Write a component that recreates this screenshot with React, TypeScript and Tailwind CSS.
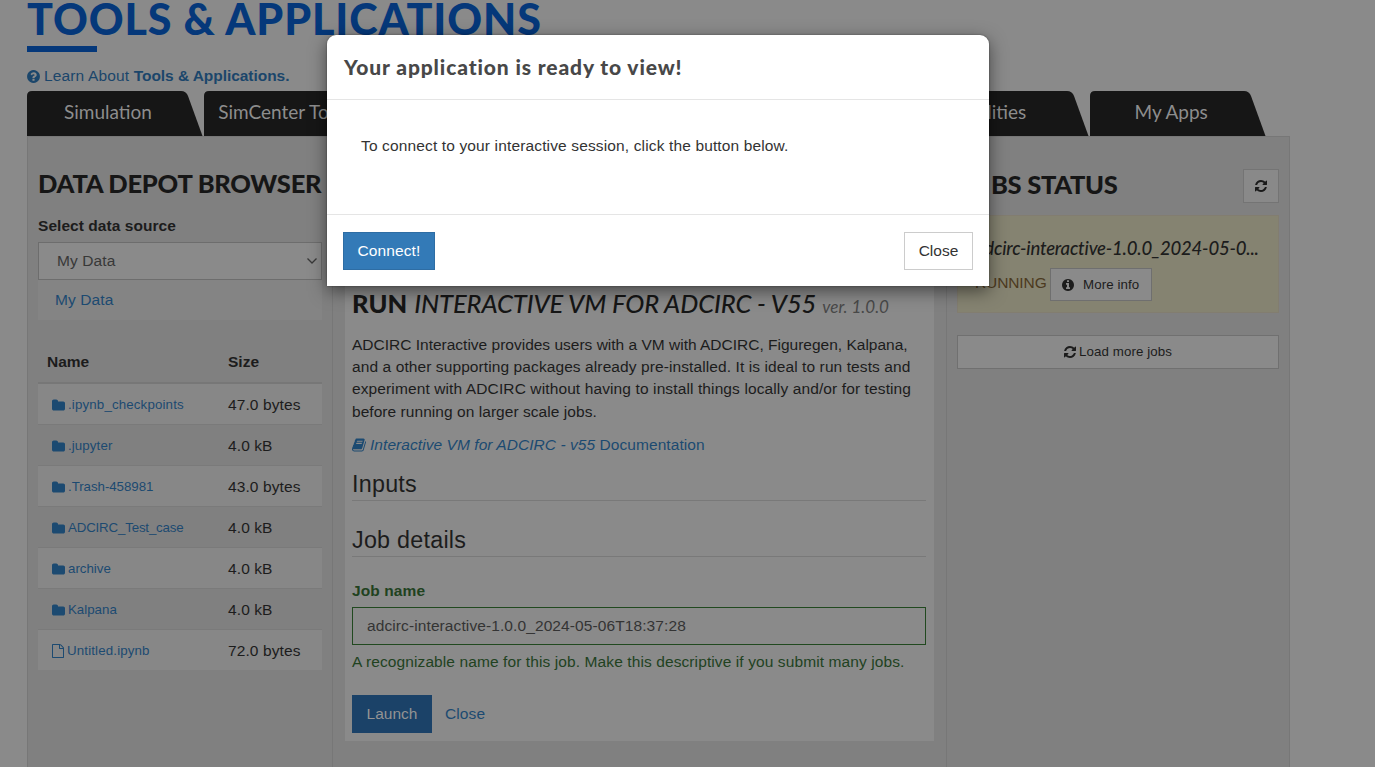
import React from "react";

const REFRESH =
  "M1511 1056q0 5-1 7-64 268-268 434.5t-478 166.5q-146 0-282.5-55t-243.5-157l-129 129q-19 19-45 19t-45-19-19-45v-448q0-26 19-45t45-19h448q26 0 45 19t19 45-19 45l-137 137q71 66 161 102t187 36q134 0 250-65t186-179q11-17 53-117 8-23 30-23h192q13 0 22.5 9.5t9.5 22.5zm25-800v448q0 26-19 45t-45 19h-448q-26 0-45-19t-19-45 19-45l138-138q-148-137-349-137-134 0-250 65t-186 179q-11 17-53 117-8 23-30 23h-199q-13 0-22.5-9.5t-9.5-22.5v-7q65-268 270-434.5t480-166.5q146 0 284 55.5t245 156.5l130-129q19-19 45-19t45 19 19 45z";
const FOLDER =
  "M1664 608v704q0 92-66 158t-158 66h-1216q-92 0-158-66t-66-158v-960q0-92 66-158t158-66h320q92 0 158 66t66 158v32h672q92 0 158 66t66 158z";
const FILE =
  "M1468 380q28 28 48 76t20 88v1152q0 40-28 68t-68 28h-1344q-40 0-68-28t-28-68v-1600q0-40 28-68t68-28h896q40 0 88 20t76 48zm-444-244v376h376q-10-29-22-41l-313-313q-12-12-41-22zm384 1528v-1024h-416q-40 0-68-28t-28-68v-416h-768v1536h1280z";
const INFO =
  "M1024 1376v-160q0-14-9-23t-23-9h-96v-512q0-14-9-23t-23-9h-320q-14 0-23 9t-9 23v160q0 14 9 23t23 9h96v320h-96q-14 0-23 9t-9 23v160q0 14 9 23t23 9h448q14 0 23-9t9-23zm-128-896v-160q0-14-9-23t-23-9h-192q-14 0-23 9t-9 23v160q0 14 9 23t23 9h192q14 0 23-9t9-23zm640 416q0 209-103 385.5t-279.5 279.5-385.5 103-385.5-103-279.5-279.5-103-385.5 103-385.5 279.5-279.5 385.5-103 385.5 103 279.5 279.5 103 385.5z";
const QUESTION =
  "M896 1376v-192q0-14-9-23t-23-9h-192q-14 0-23 9t-9 23v192q0 14 9 23t23 9h192q14 0 23-9t9-23zm256-672q0-88-55.5-163t-138.5-116-170-41q-243 0-371 213-15 24 8 42l132 100q7 6 19 6 16 0 25-12 53-68 86-92 34-24 86-24 48 0 85.5 26t37.5 59q0 38-20 61t-68 45q-63 28-115.5 86.5t-52.5 125.5v36q0 14 9 23t23 9h192q14 0 23-9t9-23q0-19 21.5-49.5t54.5-49.5q32-18 49-28.5t46-35 44.5-48 28-60.5 12.5-81zm384 192q0 209-103 385.5t-279.5 279.5-385.5 103-385.5-103-279.5-279.5-103-385.5 103-385.5 279.5-279.5 385.5-103 385.5 103 279.5 279.5 103 385.5z";
const BOOK =
  "M1639 478q40 57 18 129l-275 906q-19 64-76.5 107.5t-122.5 43.5h-923q-77 0-148.5-53.5t-99.5-131.5q-24-67-2-127 0-4 3-27t4-37q1-8-3-21.5t-3-19.5q2-11 8-21t16.5-23.5 16.5-23.5q23-38 45-91.5t30-91.5q3-10 .5-30t-.5-28q3-11 17-28t17-23q21-36 42-92t25-90q1-9-2.5-32t.5-28q4-13 22-30.5t22-22.5q19-26 42.5-84.5t27.5-96.5q1-8-3-25.5t-2-26.5q2-8 9-18t18-23 17-21q8-12 16.5-30.5t15-35 16-36 19.5-32 26.5-23.5 36-11.5 47.5 5.5l-1 3q38-9 51-9h761q74 0 114 56t18 130l-274 906q-36 119-71.5 153.5t-128.5 34.5h-869q-27 0-38 15-11 16-1 43 24 70 144 70h923q29 0 56-15.5t35-41.5l300-987q7-22 5-57 38 15 59 43zm-1064 2q-4 13 2 22.5t20 9.5h608q13 0 25.5-9.5t16.5-22.5l21-64q4-13-2-22.5t-20-9.5h-608q-13 0-25.5 9.5t-16.5 22.5zm-83 256q-4 13 2 22.5t20 9.5h608q13 0 25.5-9.5t16.5-22.5l21-64q4-13-2-22.5t-20-9.5h-608q-13 0-25.5 9.5t-16.5 22.5z";

function Icon({ d, w = 1536, className }: { d: string; w?: number; className: string }) {
  return (
    <svg viewBox={`0 0 ${w} 1792`} fill="currentColor" className={`shrink-0 ${className}`}>
      <path d={d} />
    </svg>
  );
}

function Tab({ label }: { label: string }) {
  return (
    <div className="relative h-[45px] w-[177.200px] shrink-0">
      <svg viewBox="0 0 177 45" className="absolute inset-0 h-[45px] w-[177px]">
        <path d="M0 45V5Q0 0 5 0H154Q159 0 161 5L175.500 45Z" fill="#161616" />
      </svg>
      <div className="relative flex h-[43px] w-[162px] items-center justify-center whitespace-nowrap font-[Lato] text-[19px] text-[#8d8d8d]">
        {label}
      </div>
    </div>
  );
}

const files = [
  { name: ".ipynb_checkpoints", size: "47.0 bytes", tracking: "tracking-[0.15px]" },
  { name: ".jupyter", size: "4.0 kB", tracking: "tracking-[0.1px]" },
  { name: ".Trash-458981", size: "43.0 bytes", tracking: "tracking-[-0.05px]" },
  { name: "ADCIRC_Test_case", size: "4.0 kB", tracking: "tracking-[-0.17px]" },
  { name: "archive", size: "4.0 kB", tracking: "tracking-normal" },
  { name: "Kalpana", size: "4.0 kB", tracking: "tracking-normal" },
  { name: "Untitled.ipynb", size: "72.0 bytes", tracking: "tracking-[0.15px]", file: true },
];

function DataDepot() {
  return (
    <section className="w-[306px] shrink-0 border-x border-[#777] pl-[10px]">
      <h2 className="mt-[31px] h-[30px] whitespace-nowrap font-[Lato] text-[25.500px] font-black leading-[30px] tracking-[-0.25px] text-[#161616]">
        DATA DEPOT BROWSER
      </h2>
      <div className="mt-[17px] h-[22px] font-bold leading-[22px] tracking-[0.05px]">Select data source</div>
      <div className="mt-[5px] flex h-[38px] w-[284px] items-center justify-between border border-[#6d6d6d] bg-[#8a8a8a] pl-[18px] pr-[3px] text-[#383838]">
        <span className="tracking-[0.1px]">My Data</span>
        <svg viewBox="0 0 12 8" className="h-[8px] w-[12px]" fill="none" stroke="#383838" strokeWidth="1.3">
          <path d="M1.500 1.500L6 6L10.500 1.500" />
        </svg>
      </div>
      <div className="flex h-[40px] w-[284px] items-center bg-[#848484] pl-[17px] tracking-[0.1px] text-[#1c4a71]">My Data</div>
      <div className="mt-[21px] flex h-[43px] w-[284px] items-center border-b-2 border-[#777] pl-[9px] font-bold">
        <span className="w-[181px]">Name</span>
        <span>Size</span>
      </div>
      <div className="w-[284px]">
        {files.map((f, i) => (
          <div
            key={f.name}
            className={`flex h-[41px] items-center border-b pl-[14px] pt-[2px] ${i % 2 === 0 ? "bg-[#878787]" : ""} ${i === 6 ? "border-[#808080]" : "border-[#7a7a7a]"}`}
          >
            <div className={`flex w-[176px] items-center text-[13.300px] text-[#1c4a71] ${f.tracking}`}>
              {f.file ? (
                <Icon d={FILE} className="mr-[3px] h-[14px] w-[12px]" />
              ) : (
                <Icon d={FOLDER} w={1664} className="mr-[3px] h-[15px] w-[13px]" />
              )}
              {f.name}
            </div>
            <span className="tracking-[0.1px]">{f.size}</span>
          </div>
        ))}
      </div>
    </section>
  );
}

function AppForm() {
  return (
    <section className="w-[613px] shrink-0 pl-[12px]">
      <div className="h-[604px] w-[589px] bg-[#8a8a8a] pl-[7px] pr-[8px] pt-[150px]">
        <h2 className="flex h-[32px] items-baseline whitespace-nowrap font-[Lato] leading-[32px] text-[#161616]">
          <span className="text-[25.500px] font-black">RUN</span>
          <span className="ml-[7px] text-[25.500px] font-medium italic tracking-[-0.090px]">
            INTERACTIVE VM FOR ADCIRC - V55
          </span>
          <span className="ml-[6px] text-[17px] italic text-[#484848]">ver. 1.0.0</span>
        </h2>
        <p className="mt-[15px] whitespace-nowrap leading-[22.200px]">
          ADCIRC Interactive provides users with a VM with ADCIRC, Figuregen, Kalpana,
          <br />
          <span className="tracking-[0.095px]">
            and a other supporting packages already pre-installed. It is ideal to run tests and
          </span>
          <br />
          <span className="tracking-[0.115px]">
            experiment with ADCIRC without having to install things locally and/or for testing
          </span>
          <br />
          <span className="tracking-[0.050px]">before running on larger scale jobs.</span>
        </p>
        <div className="mt-[11px] flex h-[22px] items-center whitespace-nowrap tracking-[0.060px] text-[#1c4a71]">
          <Icon d={BOOK} w={1664} className="mr-[4px] h-[16px] w-[14px]" />
          <span>
            <i>Interactive VM for ADCIRC - v55</i> Documentation
          </span>
        </div>
        <div className="mt-[12px] h-[33px] border-b border-[#797979] text-[23.300px] leading-[32px] tracking-[0.25px]">
          Inputs
        </div>
        <div className="mt-[23px] h-[33px] border-b border-[#797979] text-[23.300px] leading-[32px] tracking-[0.25px]">
          Job details
        </div>
        <div className="mt-[23px] h-[22px] font-bold leading-[22px] tracking-[0.1px] text-[#21421f]">Job name</div>
        <div className="mt-[5px] flex h-[38px] items-center border border-[#21491f] pl-[14px] tracking-[0.1px] text-[#343434]">
          adcirc-interactive-1.0.0_2024-05-06T18:37:28
        </div>
        <div className="mt-[6px] h-[22px] whitespace-nowrap leading-[22px] tracking-[0.1px] text-[#21421f]">
          A recognizable name for this job. Make this descriptive if you submit many jobs.
        </div>
        <div className="mt-[22px] flex items-center">
          <button className="h-[38px] w-[80px] bg-[#1b4268] text-[#939393]">Launch</button>
          <span className="ml-[13px] tracking-[0.1px] text-[#1c4a71]">Close</span>
        </div>
      </div>
    </section>
  );
}

function JobsStatus() {
  return (
    <section className="flex-1 border-x border-[#777] pl-[10px]">
      <div className="mt-[32px] flex h-[34px] w-[322px] items-start justify-between">
        <h2 className="whitespace-nowrap font-[Lato] text-[25.500px] font-black leading-[30px] tracking-[-0.3px] text-[#161616]">
          <span className="inline-block w-[34px]">JO</span>BS STATUS
        </h2>
        <button className="flex h-[34px] w-[36px] items-center justify-center border border-[#747474] bg-[#898989] text-[#1a1a1a]">
          <Icon d={REFRESH} className="h-[14px] w-[12px]" />
        </button>
      </div>
      <div className="mt-[12px] h-[98px] w-[322px] border border-[#827d70] bg-[#858371] pl-[17px] pt-[18px]">
        <div className="h-[28px] whitespace-nowrap font-[Lato] text-[18.500px] font-medium italic leading-[28px] tracking-[-0.2px] text-[#1c1c1c]">
          adcirc-interactive-1.0.0_2024-05-0...
        </div>
        <div className="mt-[6px] flex items-center">
          <span className="-mt-[3px] w-[75px] tracking-[-0.1px] text-[#4c3a20]">RUNNING</span>
          <button className="flex h-[33px] w-[102px] items-center border border-[#6f6f6f] bg-[#8a8a8a] pl-[11px] text-[13.300px] tracking-[0.1px] text-[#1c1c1c]">
            <Icon d={INFO} className="mr-[9px] h-[14px] w-[12px]" />
            More info
          </button>
        </div>
      </div>
      <button className="mt-[22px] flex h-[34px] w-[322px] items-center justify-center border border-[#707070] bg-[#8a8a8a] text-[13.300px] tracking-[0.1px] text-[#1c1c1c]">
        <Icon d={REFRESH} className="mr-[3px] h-[14px] w-[12px]" />
        Load more jobs
      </button>
    </section>
  );
}

function Modal() {
  return (
    <div className="absolute left-[327px] top-[35px] flex h-[251px] w-[662px] flex-col rounded-t-[9px] bg-white text-[#333] shadow-[0_5px_17px_rgba(0,0,0,0.5),0_0_2px_rgba(0,0,0,0.4)]">
      <div className="h-[65px] border-b border-[#e5e5e5] pl-[17px] pt-[17px]">
        <h4 className="whitespace-nowrap font-[Lato] text-[21px] font-black leading-[30px] tracking-[0.870px] text-[#484848]">
          Your application is ready to view!
        </h4>
      </div>
      <div className="h-[115px] border-b border-[#e5e5e5] pl-[34px] pt-[35px] leading-[22px] tracking-[0.140px]">
        To connect to your interactive session, click the button below.
      </div>
      <div className="flex flex-1 items-center justify-between pl-[16px] pr-[16px]">
        <button className="h-[38px] w-[92px] border border-[#2e6da4] bg-[#337ab7] tracking-[0.1px] text-white">
          Connect!
        </button>
        <button className="h-[38px] w-[69px] border border-[#ccc] bg-white text-[#333]">Close</button>
      </div>
    </div>
  );
}

export default function App() {
  return (
    <main className="relative flex h-[767px] w-[1375px] flex-col overflow-hidden bg-[#8a8a8a] pl-[27px] font-['Liberation_Sans',Arial,sans-serif] text-[15.500px] text-[#1c1c1c]">
      <h1 className="-mt-[8px] h-[54px] whitespace-nowrap font-[Lato] text-[43px] font-black leading-[54px] tracking-[0.880px] text-[#05387a]">
        TOOLS &amp; APPLICATIONS
      </h1>
      <div className="h-[6px] w-[70px] bg-[#05387a]" />
      <div className="mt-[13px] flex h-[22px] items-center whitespace-nowrap text-[#1b466b]">
        <Icon d={QUESTION} className="mr-[4px] h-[15px] w-[13px]" />
        <span>
          <span className="tracking-[0.15px]">Learn About </span>
          <b className="tracking-[-0.05px]">Tools &amp; Applications.</b>
        </span>
      </div>
      <nav className="mt-[4px] flex h-[45px]">
        <Tab label="Simulation" />
        <Tab label="SimCenter Tools" />
        <Tab label="Visualization" />
        <Tab label="Analysis" />
        <Tab label="Hazard Apps" />
        <Tab label="Utilities" />
        <Tab label="My Apps" />
      </nav>
      <div className="flex w-[1263px] flex-1 border-t border-[#777] bg-[#808080]">
        <DataDepot />
        <AppForm />
        <JobsStatus />
      </div>
      <Modal />
    </main>
  );
}
